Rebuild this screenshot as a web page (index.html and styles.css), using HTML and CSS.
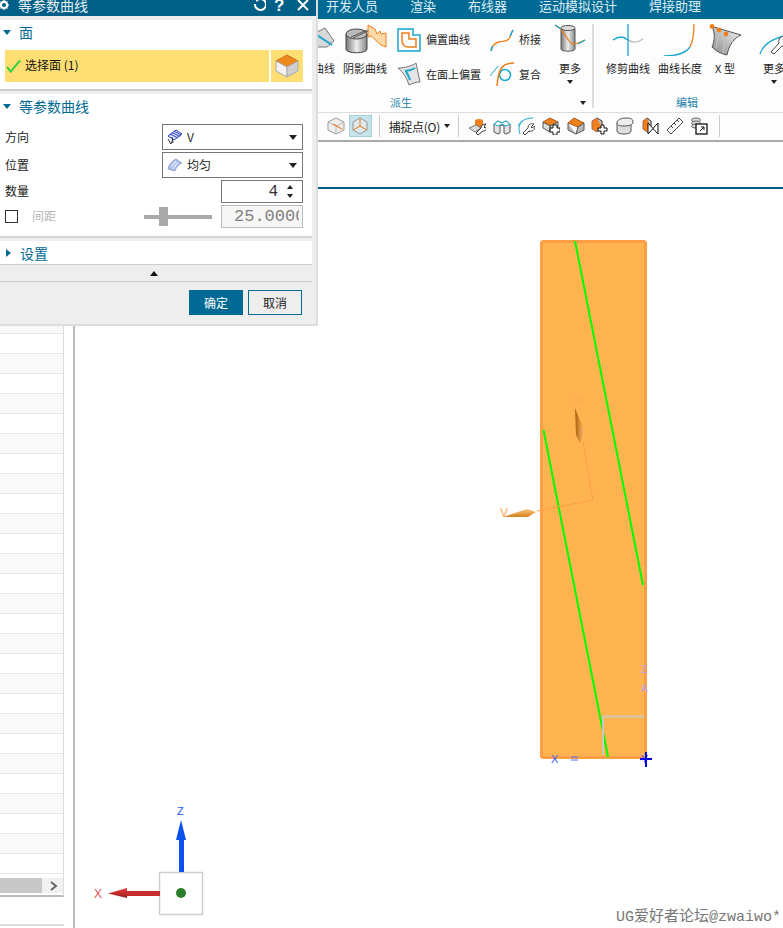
FILE: index.html
```html
<!DOCTYPE html>
<html lang="zh-CN">
<head>
<meta charset="utf-8">
<title>等参数曲线</title>
<link rel="stylesheet" href="styles.css">
</head>
<body>
<div class="app">
  <nav class="tabs">
    <span class="tab t1">开发人员</span>
    <span class="tab t2">渲染</span>
    <span class="tab t3">布线器</span>
    <span class="tab t4">运动模拟设计</span>
    <span class="tab t5">焊接助理</span>
  </nav>

  <section class="ribbon">
    <div class="group g1">
      <div class="group-body">
        <div class="big cut">
          <svg class="ico32" viewBox="0 0 22 32"><path d="M0 8l8-4 9 13-7 6H0z" fill="#d8d8d8" stroke="#777"/><path d="M0 11l15 10" stroke="#19a7ce" stroke-width="2"/></svg>
          <span class="cutlabel">曲线</span>
        </div>
        <div class="big b-shadow">
          <svg class="ico32" viewBox="0 0 44 32"><defs><linearGradient id="cyl" x1="0" x2="1"><stop offset="0" stop-color="#777"/><stop offset=".5" stop-color="#eee"/><stop offset="1" stop-color="#888"/></linearGradient></defs><path d="M25 1l7 4 2 5 3-3 1 3 5-1v14l-5-2-10-9-3 1z" fill="#fbd9a8" stroke="#ee7f1a"/><path d="M3 10v15c0 5 21 5 21 0V10z" fill="url(#cyl)" stroke="#444"/><ellipse cx="13.500" cy="10" rx="10.500" ry="5" fill="#bbb" stroke="#444"/><path d="M8 13L24 6M10 14l15-7" stroke="#555"/></svg>
          <span>阴影曲线</span>
        </div>
        <div class="stack s1">
          <div class="side">
            <svg class="ico24" viewBox="0 0 24 24"><path d="M1 1h15v6h7v16H1z" fill="#fff" stroke="#19a7ce" stroke-width="1.500"/><path d="M5 5h7v6h7v8H11a6 6 0 0 1-6-6z" fill="#fff" stroke="#ee7f1a" stroke-width="1.500"/></svg>
            <span>偏置曲线</span>
          </div>
          <div class="side">
            <svg class="ico24" viewBox="0 0 24 24"><path d="M1 6c7 0 14-2 18-5l4 19c-4 0-7 1-11 3C10 16 6 10 1 6z" fill="#e4e4e4" stroke="#777"/><path d="M8 9c3 0 7-1 10-3M9 9c2 4 3 6 4 9" fill="none" stroke="#19a7ce" stroke-width="2"/></svg>
            <span>在面上偏置</span>
          </div>
        </div>
        <div class="stack s2">
          <div class="side">
            <svg class="ico24" viewBox="0 0 24 24"><path d="M1 23c1-5 3-8 8-9 5-1 7 0 10-3 2-3 2-6 4-9" fill="none" stroke="#ee7f1a" stroke-width="1.300"/><path d="M1 23l1.500-5M20 8l3-6" stroke="#19a7ce" stroke-width="1.500"/></svg>
            <span>桥接</span>
          </div>
          <div class="side">
            <svg class="ico24" viewBox="0 0 24 24"><circle cx="15" cy="13" r="5.500" fill="none" stroke="#19a7ce" stroke-width="1.500"/><path d="M24 1c-12 0-16 6-17 24" fill="none" stroke="#ee7f1a" stroke-width="1.500"/><path d="M0 14L8 4" stroke="#19a7ce" stroke-width="1"/></svg>
            <span>复合</span>
          </div>
        </div>
        <div class="big b-more">
          <svg class="ico32" viewBox="0 0 32 32"><path d="M7 5v20c0 3 14 3 14 0V5z" fill="url(#cyl)" stroke="#555"/><ellipse cx="14" cy="4" rx="7" ry="2.500" fill="#ddd" stroke="#555"/><path d="M1 1c8 4 10 10 14 16 3 4 6 4 16-1" fill="none" stroke="#ee7f1a" stroke-width="1.200"/><path d="M1 1l6 4M24 20l7-4" stroke="#19a7ce" stroke-width="1.300"/></svg>
          <span>更多</span>
          <i class="tri-down small"></i>
        </div>
      </div>
      <div class="group-label"><span class="lab1">派生</span><i class="tri-down small chev"></i></div>
    </div>
    <div class="group g2">
      <div class="group-body">
        <div class="big b-trim">
          <svg class="ico32" viewBox="0 0 32 32"><path d="M1 16c6-4 10-4 15 0" fill="none" stroke="#19a7ce" stroke-width="1.300"/><path d="M16 16c5 3 9 3 15-1" fill="none" stroke="#bbb" stroke-width="1.500"/><path d="M16 0v32" stroke="#19a7ce" stroke-width="1.300"/></svg>
          <span>修剪曲线</span>
        </div>
        <div class="big b-len">
          <svg class="ico32" viewBox="0 0 32 32"><path d="M0 32c12 0 21-2 26-9" fill="none" stroke="#19a7ce" stroke-width="1.300"/><path d="M26 23c3-6 4-14 4-23" fill="none" stroke="#ee7f1a" stroke-width="1.300"/></svg>
          <span>曲线长度</span>
        </div>
        <div class="big b-x">
          <svg class="ico32" viewBox="0 0 32 32"><defs><linearGradient id="sf" x1="1" y1="0" x2="0" y2="1"><stop offset="0" stop-color="#f6f6f6"/><stop offset="1" stop-color="#8a8a8a"/></linearGradient></defs><path d="M3 2.500L32 11C25 14 20 21 18 31C12 30 7 27 3 23C6 16 6 9 3 2.500z" fill="url(#sf)" stroke="#555"/><path d="M10 6L7 24M17 10L14 29M6 13L24 18" fill="none" stroke="#c4c4c4"/><circle cx="3" cy="2.500" r="2.400" fill="#ee7f1a"/><circle cx="10" cy="6" r="2.400" fill="#ee7f1a"/><circle cx="17" cy="10" r="2.400" fill="#ee7f1a"/></svg>
          <span>X 型</span>
        </div>
        <div class="big b-more2">
          <svg class="ico32" viewBox="0 0 32 32"><path d="M2 30c3-9 10-14 24-18" fill="none" stroke="#19a7ce" stroke-width="1.300"/><path d="M13 28l8-9c-1-4 2-7 6-7l-2 4 2 2 4-2c0 4-3 7-7 6l-8 8z" fill="#fff" stroke="#444"/></svg>
          <span>更多</span>
          <i class="tri-down small"></i>
        </div>
      </div>
      <div class="group-label"><span class="lab2">编辑</span></div>
    </div>
  </section>

  <section class="toolbar">
    <span class="tbtn">
      <svg class="ico18" viewBox="0 0 18 18"><path d="M9 1l8 4v8l-8 4-8-4V5z" fill="#eee" stroke="#999"/><path d="M1 5l8 4 8-4M9 9v8" fill="none" stroke="#bbb"/><path d="M6 7l9 5" stroke="#ee7f1a" stroke-width="1.200"/></svg>
    </span>
    <span class="tbtn active">
      <svg class="ico18" viewBox="0 0 18 18"><path d="M9 1l7 4v8l-7 4-7-4V5z" fill="#dfe8ea" stroke="#999"/><path d="M9 1v8l7 4M9 9l-7 4" fill="none" stroke="#ee7f1a" stroke-width="1"/></svg>
    </span>
    <i class="tsep sep1"></i>
    <span class="snap">捕捉点(O)</span>
    <i class="tri-down small snap-arrow"></i>
    <i class="tsep sep2"></i>
    <span class="tbtn first">
      <svg class="ico18" viewBox="0 0 18 18"><ellipse cx="11" cy="4" rx="4" ry="2" fill="#ee7f1a"/><path d="M7 4v6h8V4" fill="#ee7f1a"/><path d="M1 11l7-3 5 3-6 4z" fill="#ddd" stroke="#777"/><path d="M8 16l5-5c0-3 2-4 5-4l-2 3 1 1 2-1c0 3-2 4-4 4l-5 4z" fill="#fff" stroke="#333"/></svg>
    </span>
    <span class="tbtn">
      <svg class="ico18" viewBox="0 0 18 18"><path d="M1 7l4-3 4 2 4-2 4 3v8l-4 2-2-1V9L9 8 7 9v7l-2 1-4-2z" fill="#e4e4e4" stroke="#555"/><path d="M1 7l4-3 4 2 4-2 4 3-4 2-2-1-2-1-2 1-2 1z" fill="#fff" stroke="#19a7ce"/></svg>
    </span>
    <span class="tbtn">
      <svg class="ico18" viewBox="0 0 18 18"><path d="M1 9c2-5 8-8 15-8M3 17C1 12 2 7 6 4" fill="none" stroke="#19a7ce"/><path d="M6 16l5-5c0-3 2-5 6-4l-3 3 1 1 3-2c0 4-3 6-6 5l-4 4z" fill="#fff" stroke="#444"/></svg>
    </span>
    <span class="tbtn">
      <svg class="ico18" viewBox="0 0 18 18"><path d="M1 5l7-4 8 4-8 4z" fill="#ee7f1a" stroke="#b05a10"/><path d="M1 5v6l7 4V9zM16 5v5l-8 5V9z" fill="#ddd" stroke="#555"/><path d="M11 8h4v3h3v4h-3v3h-4v-3H8v-4h3z" fill="#fff" stroke="#111"/></svg>
    </span>
    <span class="tbtn">
      <svg class="ico18" viewBox="0 0 18 18"><path d="M1 6l6-5 10 5-6 4z" fill="#ee7f1a" stroke="#b05a10"/><path d="M1 6v7l8 4 8-4V6l-6 4-2 7" fill="#bbb" stroke="#555"/></svg>
    </span>
    <span class="tbtn">
      <svg class="ico18" viewBox="0 0 18 18"><path d="M1 4l5-3 5 3v8l-5 3-5-3z" fill="#ee7f1a" stroke="#a65"/><path d="M6 1l5 3v8" fill="#bbb" stroke="#555"/><path d="M10 8h3v3h3v3h-3v3h-3v-3H7v-3h3z" fill="#fff" stroke="#111"/></svg>
    </span>
    <span class="tbtn">
      <svg class="ico18" viewBox="0 0 18 18"><path d="M1 6v8c0 4 14 4 14 0V6z" fill="#ddd" stroke="#555"/><path d="M1 6c0-3 4-5 9-5s7 1 7 4-4 4-9 4-7-1-7-3z" fill="#eee" stroke="#555"/></svg>
    </span>
    <span class="tbtn">
      <svg class="ico18" viewBox="0 0 18 18"><path d="M2 4l4-3 4 3v8l-4 3-4-3z" fill="#ee7f1a" stroke="#a65"/><path d="M6 1l4 3v8" fill="#bbb" stroke="#555"/><path d="M7 6l10 11V6L7 17z" fill="#fff" stroke="#111"/></svg>
    </span>
    <span class="tbtn">
      <svg class="ico18" viewBox="0 0 18 18"><path d="M1 13L13 1l4 4L5 17z" fill="#fff" stroke="#444"/><path d="M5 9l2 2M8 6l2 2M11 3l2 2" stroke="#444"/></svg>
    </span>
    <span class="tbtn">
      <svg class="ico18" viewBox="0 0 18 18"><ellipse cx="6" cy="3" rx="4.500" ry="2" fill="#ddd" stroke="#666"/><ellipse cx="6" cy="6" rx="4.500" ry="2" fill="#ddd" stroke="#666"/><ellipse cx="6" cy="9" rx="4.500" ry="2" fill="#ddd" stroke="#666"/><rect x="6" y="7" width="11" height="10" fill="#fff" stroke="#111" stroke-width="1.300"/><path d="M10 14l4-4M11 10h3v3" fill="none" stroke="#111"/></svg>
    </span>
    <i class="tsep sep3"></i>
  </section>

  <main class="main">
    <aside class="left">
      <div class="rows">
        <div class="row alt"></div><div class="row"></div><div class="row alt"></div><div class="row"></div>
        <div class="row alt"></div><div class="row"></div><div class="row alt"></div><div class="row"></div>
        <div class="row alt"></div><div class="row"></div><div class="row alt"></div><div class="row"></div>
        <div class="row alt"></div><div class="row"></div><div class="row alt"></div><div class="row"></div>
        <div class="row alt"></div><div class="row"></div><div class="row alt"></div><div class="row"></div>
        <div class="row alt"></div><div class="row"></div><div class="row alt"></div><div class="row"></div>
        <div class="row alt"></div><div class="row"></div><div class="row alt"></div><div class="row"></div>
        <div class="hscroll"><i class="hthumb"></i><svg class="hchev" viewBox="0 0 8 10"><path d="M1 1l5 4-5 4" fill="none" stroke="#666" stroke-width="2"/></svg></div>
      </div>
      <div class="leftfoot"></div>
    </aside>

    <div class="viewport">
      <div class="vbar"></div>
      <svg class="scene" viewBox="75 189 708 739">
        <defs>
          <linearGradient id="ua" x1="0" x2="1"><stop offset="0" stop-color="#a85f10"/><stop offset=".5" stop-color="#e09238"/><stop offset="1" stop-color="#ffc479"/></linearGradient>
          <linearGradient id="va" x1="0" y1="1" x2="0" y2="0"><stop offset="0" stop-color="#d08020"/><stop offset="1" stop-color="#ffc87c"/></linearGradient>
          <linearGradient id="ra" x1="0" y1="0" x2="0" y2="1"><stop offset="0" stop-color="#ee3b3b"/><stop offset="1" stop-color="#9a1e1e"/></linearGradient>
        </defs>
        <rect x="541.500" y="241.500" width="104" height="516" rx="2" fill="#ffb44f" stroke="#ff9f45" stroke-width="3"/>
        <path d="M575 241L643 585M543.500 430L608 757" fill="none" stroke="#00ff00" stroke-width="2"/>
        <path d="M603 716.500V755M603 716.500H644" fill="none" stroke="#cdc8bc" stroke-width="2"/>
        <path d="M593 500L583 442M593 500L537 511" fill="none" stroke="#ff9f45" stroke-width="1"/>
        <path d="M575 408L585 432L580 443L576 435z" fill="url(#ua)"/>
        <path d="M503 517L527 509L536 512L528 517z" fill="url(#va)"/>
        <text class="uv" x="574.500" y="405">U</text>
        <text class="uv" x="500" y="517">V</text>
        <text class="bl" x="551" y="763">X</text>
        <path d="M571 757h7M571 760h7" stroke="#4a6cff"/>
        <text class="bl" x="641" y="763">Y</text>
        <path d="M646 752v15M640 759h12" stroke="#0000ee" stroke-width="2"/>
        <text class="pale" x="641" y="673">Z</text>
        <text class="pale" x="641" y="692">A</text>
        <rect x="159.500" y="872.500" width="43" height="42" fill="#fff" stroke="#cdcdcd" stroke-width="1.500"/>
        <circle cx="181" cy="893" r="5" fill="#2a7d2a"/>
        <rect x="179" y="840" width="5" height="32" fill="#0b50f0"/>
        <path d="M181 820L186 840H176z" fill="#0b50f0"/>
        <rect x="127" y="891" width="33" height="5" fill="#c62e2e"/>
        <path d="M108 893.500L127 888V898z" fill="url(#ra)"/>
        <text class="zl" x="177" y="815">Z</text>
        <text class="xl" x="94" y="898">X</text>
      </svg>
      <span class="watermark">UG爱好者论坛@zwaiwo*</span>
    </div>
  </main>

  <div class="dialog">
    <header class="dlg-title">
      <svg class="gear" viewBox="0 0 12 12"><circle cx="5" cy="5" r="3.200" fill="none" stroke="#fff" stroke-width="2.400"/><path d="M5 0v10M0 5h10M1.500 1.500l7 7M8.500 1.500l-7 7" stroke="#fff" stroke-width="1"/><circle cx="5" cy="5" r="2" fill="#005f87"/></svg>
      <span class="dlg-name">等参数曲线</span>
      <svg class="ctl" viewBox="0 0 14 14"><path d="M8 1a5.500 5.500 0 1 1-6 5" fill="none" stroke="#fff" stroke-width="2" transform="translate(1 1)"/><path d="M4 0l5 2-5 3z" fill="#fff"/></svg>
      <span class="q">?</span>
      <svg class="ctl close" viewBox="0 0 12 12"><path d="M1 0l10 10M11 0L1 10" stroke="#fff" stroke-width="2"/></svg>
    </header>

    <section class="sec sec-face">
      <div class="sec-head"><i class="tri-open"></i><span class="h1">面</span></div>
      <div class="pick">
        <div class="pick-main">
          <svg class="check" viewBox="0 0 16 14"><path d="M1 8l4 5L15 1" fill="none" stroke="#2ecc3e" stroke-width="2"/></svg>
          <span>选择面 (1)</span>
        </div>
        <div class="pick-ico">
          <svg class="ico24" viewBox="0 0 24 24"><path d="M12 1l11 6-11 6L1 7z" fill="#ee8a1d" stroke="#c96f10"/><path d="M1 7v10l11 6V13z" fill="#f2f2f2" stroke="#aaa"/><path d="M23 7v10l-11 6V13z" fill="#cfcfcf" stroke="#aaa"/></svg>
        </div>
      </div>
    </section>

    <section class="sec sec-main">
      <div class="sec-head"><i class="tri-open"></i><span class="h1">等参数曲线</span></div>
      <div class="field f-dir">
        <label>方向</label>
        <div class="select">
          <svg class="ico16" viewBox="0 0 16 16"><path d="M1 7l8-6 6 4-8 6z" fill="#dfe6fa" stroke="#2a3cc0"/><path d="M3 5l8 4M5 3.500l8 4M7 2l7 4" stroke="#2a3cc0"/><path d="M1 10l3 5 2-5M5 8l1 6" fill="none" stroke="#333"/></svg>
          <span>V</span><i class="tri-down"></i>
        </div>
      </div>
      <div class="field f-pos">
        <label>位置</label>
        <div class="select">
          <svg class="ico16" viewBox="0 0 16 16"><path d="M1 12C2 7 5 4 9 2l6 4c-3 1-6 4-7 8z" fill="#a9bfe8" stroke="#8fa8d8"/><path d="M4 10l5-6M6 12l5-7" stroke="#fff"/></svg>
          <span>均匀</span><i class="tri-down"></i>
        </div>
      </div>
      <div class="field f-num">
        <label>数量</label>
        <div class="numbox"><span class="mono">4</span><span class="spin"><i class="up"></i><i class="dn"></i></span></div>
      </div>
      <div class="field f-gap">
        <i class="chk"></i>
        <label class="dim">间距</label>
        <div class="slider"><i class="thumb"></i></div>
        <div class="numbox off"><span class="mono clip">25.0000</span></div>
      </div>
    </section>

    <section class="sec sec-set">
      <div class="sec-head"><i class="tri-closed"></i><span class="h1">设置</span></div>
    </section>

    <div class="collapse"><i class="tri-up"></i></div>

    <footer class="dlg-foot">
      <button class="btn ok" type="button">确定</button>
      <button class="btn cancel" type="button">取消</button>
    </footer>
  </div>
</div>
</body>
</html>
```

FILE: styles.css
```css
* { box-sizing: border-box; }
html, body { margin: 0; padding: 0; background: #fff; }
body { font-family: "Noto Sans CJK SC", "Noto Sans", sans-serif; color: #222; }
i { display: block; }
svg { display: block; flex: none; }

.app { position: relative; width: 783px; height: 928px; overflow: hidden; display: flex; flex-direction: column; }

/* top tabs */
.tabs { height: 19px; flex: none; background: #006a94; color: #dfeef4; font-size: 13px; line-height: 11px; display: flex; overflow: hidden; padding-left: 326px; }
.tab { white-space: nowrap; }
.t2 { margin-left: 32px; }
.t3 { margin-left: 32px; }
.t4 { margin-left: 32px; }
.t5 { margin-left: 32px; }

/* ribbon */
.ribbon { height: 94px; flex: none; display: flex; padding: 5px 0 0 318px; background: #fdfdfd; border-bottom: 1px solid #ddd; overflow: hidden; font-size: 11px; line-height: 14px; color: #222; }
.group { display: flex; flex-direction: column; flex: none; }
.g1 { width: 276px; border-right: 2px solid #ddd; height: 84px; }
.g2 { width: 200px; }
.group-body { display: flex; height: 71px; flex: none; }
.group-label { position: relative; height: 14px; color: #1c7fa8; }
.lab1 { position: absolute; left: 72px; top: 0; }
.lab2 { position: absolute; left: 82px; top: 0; }
.chev { position: absolute; right: 6px; top: 6px; }

.big { display: flex; flex-direction: column; align-items: center; flex: none; white-space: nowrap; }
.big > span { margin-top: 5px; }
.big > .tri-down { margin-top: 5px; }
.ico32 { height: 32px; }
.ico24 { width: 24px; height: 24px; }
.ico18 { width: 18px; height: 18px; }
.ico16 { width: 16px; height: 16px; }
.cut { width: 21px; overflow: visible; align-items: flex-end; position: relative; }
.cut .ico32 { width: 22px; }
.cutlabel { margin-right: 4px; }
.b-shadow { width: 48px; margin-left: 2px; }
.b-shadow .ico32 { width: 44px; }
.stack { display: flex; flex-direction: column; gap: 10px; flex: none; padding-top: 4px; white-space: nowrap; }
.side { display: flex; align-items: center; gap: 5px; height: 24px; }
.side:first-child span { padding-bottom: 2px; }
.s1 { width: 88px; margin-left: 8px; }
.s2 { width: 50px; margin-left: 5px; }
.b-more { width: 36px; margin-left: 12px; }
.b-more .ico32 { width: 32px; }
.b-trim { width: 48px; margin-left: 10px; }
.b-trim .ico32, .b-len .ico32, .b-x .ico32, .b-more2 .ico32 { width: 32px; }
.b-len { width: 48px; margin-left: 4px; }
.b-x { width: 40px; margin-left: 1px; }
.b-more2 { width: 44px; margin-left: 7px; }

.tri-down { width: 0; height: 0; border: 4px solid transparent; border-top: 5px solid #222; border-bottom: 0; }
.tri-down.small { border-width: 4px 3px 0; border-top-color: #222; }

/* toolbar */
.toolbar { height: 29px; flex: none; display: flex; align-items: center; padding: 0 0 2px 324px; background: #fdfdfd; border-bottom: 2px solid #aaa; font-size: 12px; }
.tbtn { width: 24.700px; height: 22px; display: flex; align-items: center; justify-content: center; flex: none; }
.tbtn.active { width: 23px; background: #c6e4ec; border: 1px solid #a5cfd9; margin-left: 0; }
.tsep { width: 1px; height: 22px; background: #ccc; flex: none; }
.sep1 { margin-left: 7px; }
.snap { margin-left: 9px; padding-top: 1px; white-space: nowrap; width: 51px; flex: none; letter-spacing: -.3px; }
.snap-arrow { margin-left: 4px; }
.sep2 { margin-left: 8px; }
.tbtn.first { margin-left: 6px; }
.sep3 { margin-left: 7px; }

/* main */
.main { flex: 1; display: flex; min-height: 0; }
.left { width: 75px; flex: none; border-right: 2px solid #bbb; display: flex; flex-direction: column; }
.rows { width: 64px; padding-top: 172px; border-right: 1px solid #ddd; height: 755px; border-bottom: 2px solid #bbb; }
.row { height: 20px; border-bottom: 1px solid #e6e6e6; }
.row.alt { background: #f9f9f9; }
.hscroll { height: 15px; margin-top: 4px; background: #f1f1f1; display: flex; align-items: center; }
.hthumb { width: 42px; height: 15px; background: #c8c8c8; }
.hchev { width: 8px; height: 10px; margin-left: 8px; }
.leftfoot { width: 64px; height: 2px; background: #ddd; margin-top: 27px; }

.viewport { flex: 1; position: relative; display: flex; flex-direction: column; min-width: 0; }
.vbar { height: 47px; flex: none; border-bottom: 2px solid #005f87; }
.scene { width: 708px; height: 739px; flex: none; }
.scene text { font-family: "Liberation Sans", sans-serif; }
.uv { font-size: 12px; fill: #ffa65c; }
.bl { font-size: 11px; fill: #3f5bff; }
.pale { font-size: 10px; fill: #b6a0ee; }
.zl { font-size: 11px; fill: #1a56f0; }
.xl { font-size: 12px; fill: #e25555; }
.watermark { position: absolute; right: 2px; bottom: 1px; font-family: "Liberation Mono", "Noto Sans CJK SC", monospace; font-size: 15px; line-height: 18px; color: #777; white-space: nowrap; }

/* dialog */
.dialog { position: absolute; left: 0; top: 0; width: 318px; height: 326px; background: #eee; border-right: 2px solid #ddd; border-bottom: 2px solid #ddd; display: flex; flex-direction: column; font-size: 12px; }
.dlg-title { height: 16px; flex: none; background: #005f87; color: #e6f0f4; display: flex; align-items: flex-start; overflow: hidden; }
.gear { width: 12px; height: 12px; margin: 0 0 0 -1px; }
.dlg-name { font-size: 14px; line-height: 11px; margin-left: 7px; width: 234px; flex: none; white-space: nowrap; }
.ctl { width: 14px; height: 14px; margin-top: -3px; }
.q { width: 11px; font: bold 17px/11px "Liberation Sans", sans-serif; margin-left: 8px; color: #fff; }
.close { width: 12px; height: 12px; margin: 0 0 0 12px; }

.sec { width: 312px; background: #fff; flex: none; }
.sec-face { margin-top: 4px; height: 71px; border-bottom: 2px solid #ccc; }
.sec-main { margin-top: 3px; height: 144px; border-bottom: 2px solid #d5d5d5; }
.sec-set { margin-top: 3px; height: 24px; border-bottom: 1px solid #ccc; }
.sec-head { display: flex; align-items: center; height: 26px; padding-bottom: 2px; color: #006a94; font-size: 14px; line-height: 18px; }
.h1 { margin-left: 8px; white-space: nowrap; }
.tri-open { width: 0; height: 0; margin-left: 3px; border: 4px solid transparent; border-top: 5px solid #006a94; border-bottom: 0; }
.tri-closed { width: 0; height: 0; margin-left: 6px; border: 4px solid transparent; border-left: 5px solid #006a94; border-right: 0; }
.sec-set .h1 { margin-left: 9px; }

.pick { display: flex; gap: 2px; margin: 4px 0 0 5px; height: 32px; }
.pick-main { width: 264px; background: #ffdf73; display: flex; align-items: center; padding-left: 1px; gap: 4px; color: #111; }
.pick-main span { padding-bottom: 3px; }
.check { width: 15px; height: 14px; }
.pick-ico { width: 32px; background: #ffdf73; display: flex; align-items: center; justify-content: center; }

.field { display: flex; align-items: center; position: relative; padding-left: 5px; }
.field label { white-space: nowrap; width: 157px; flex: none; padding-bottom: 2px; }
.f-dir { height: 26px; margin-top: 4px; }
.f-pos { height: 26px; margin-top: 2px; }
.f-num { height: 23px; margin-top: 2px; }
.f-gap { height: 23px; margin-top: 2px; }
.select { width: 141px; height: 26px; border: 1px solid #777; background: #fff; display: flex; align-items: center; padding: 0 5px 0 4px; gap: 4px; }
.select span { flex: 1; padding-bottom: 2px; }
.numbox { width: 82px; height: 23px; border: 1px solid #777; background: #fff; margin-left: 59px; display: flex; align-items: center; justify-content: flex-end; overflow: hidden; }
.mono { font: 16px/20px "Liberation Mono", monospace; color: #333; }
.spin { width: 24px; display: flex; flex-direction: column; align-items: center; gap: 5px; }
.up { border: 3px solid transparent; border-bottom: 4px solid #222; border-top: 0; width: 0; height: 0; }
.dn { border: 3px solid transparent; border-top: 4px solid #222; border-bottom: 0; width: 0; height: 0; }
.chk { width: 13px; height: 13px; border: 1px solid #333; background: #fff; flex: none; }
.field label.dim { width: 112px; margin-left: 14px; color: #b5b5b5; }
.slider { position: absolute; left: 144px; top: 10px; width: 68px; height: 4px; background: #aaa; }
.thumb { position: absolute; left: 15px; top: -8px; width: 9px; height: 19px; background: #aaa; }
.numbox.off { position: absolute; left: 221px; margin: 0; background: #f6f6f6; border-color: #bbb; justify-content: flex-start; padding-left: 12px; }
.clip { display: block; width: 65px; overflow: hidden; font-size: 17px; color: #808080; white-space: nowrap; }

.collapse { height: 17px; flex: none; width: 312px; display: flex; align-items: center; justify-content: center; border-bottom: 1px solid #ccc; padding-right: 5px; }
.tri-up { width: 0; height: 0; border: 4.500px solid transparent; border-bottom: 5px solid #111; border-top: 0; }

.dlg-foot { display: flex; gap: 5px; padding: 8px 0 0 189px; }
.btn { width: 54px; height: 25px; padding: 0; font: 12px/1 "Noto Sans CJK SC", sans-serif; border: 1px solid #006a94; background: #eee; color: #222; }
.btn.ok { background: #006a94; color: #fff; }
```
